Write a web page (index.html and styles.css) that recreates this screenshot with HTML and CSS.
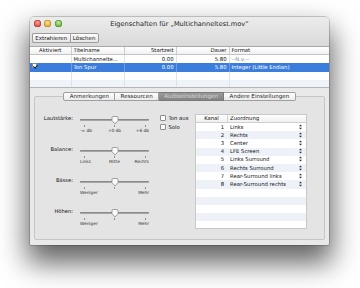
FILE: index.html
```html
<html>
	<head>
		<meta charset="UTF-8">
		<title>Eigenschaften</title>
		<link rel="stylesheet" href="styles.css">
	</head>
	<body>
		<div class="window">
			<div class="top">
				<div class="titlebar">
					<div class="lights">
						<span class="light red"></span>
						<span class="light yellow"></span>
						<span class="light green"></span>
					</div>
					<div class="title">Eigenschaften für „Multichanneltest.mov“</div>
					<div></div>
				</div>
				<div class="toolbar">
					<button class="btn first">Extrahieren</button><button class="btn">Löschen</button>
				</div>
			</div>

			<div class="tracks">
				<div class="trow head">
					<div class="cell center">Aktiviert</div>
					<div class="cell">Titelname</div>
					<div class="cell right">Startzeit</div>
					<div class="cell right">Dauer</div>
					<div class="cell">Format</div>
				</div>
				<div class="trow">
					<div class="cell"></div>
					<div class="cell">Multichannelte...</div>
					<div class="cell right">0.00</div>
					<div class="cell right">5.80</div>
					<div class="cell grey">--N.v.--</div>
				</div>
				<div class="trow selected">
					<div class="cell"><span class="check on"></span></div>
					<div class="cell">Ton Spur</div>
					<div class="cell right">0.00</div>
					<div class="cell right">5.80</div>
					<div class="cell">Integer (Little Endian)</div>
				</div>
				<div class="trow">
					<div class="cell"></div><div class="cell"></div><div class="cell"></div><div class="cell"></div><div class="cell"></div>
				</div>
				<div class="trow">
					<div class="cell"></div><div class="cell"></div><div class="cell"></div><div class="cell"></div><div class="cell"></div>
				</div>
			</div>

			<div class="panel">
				<div class="tabs">
					<span class="tab">Anmerkungen</span>
					<span class="tab">Ressourcen</span>
					<span class="tab active">Audioeinstellungen</span>
					<span class="tab">Andere Einstellungen</span>
				</div>
				<div class="group">
					<div class="sliders">
						<div class="srow">
							<div class="slabel">Lautstärke:</div>
							<div class="slider">
								<div class="track"><svg class="thumb" width="8" height="9" viewBox="0 0 8 9"><path d="M1 1.6 Q1 .5 2.1 .5 H5.9 Q7 .5 7 1.6 V4.6 L4 8 L1 4.6 Z" fill="#fbfbfb" stroke="#8a8a8a" stroke-width=".8"/></svg></div>
								<div class="ticks"><i></i><i></i><i></i></div>
								<div class="scale"><span>-∞ db</span><span>+0 db</span><span>+6 db</span></div>
							</div>
						</div>
						<div class="srow">
							<div class="slabel">Balance:</div>
							<div class="slider">
								<div class="track"><svg class="thumb" width="8" height="9" viewBox="0 0 8 9"><path d="M1 1.6 Q1 .5 2.1 .5 H5.9 Q7 .5 7 1.6 V4.6 L4 8 L1 4.6 Z" fill="#fbfbfb" stroke="#8a8a8a" stroke-width=".8"/></svg></div>
								<div class="ticks"><i></i><i></i><i></i></div>
								<div class="scale"><span>Links</span><span>Mitte</span><span>Rechts</span></div>
							</div>
						</div>
						<div class="srow">
							<div class="slabel">Bässe:</div>
							<div class="slider">
								<div class="track"><svg class="thumb" width="8" height="9" viewBox="0 0 8 9"><path d="M1 1.6 Q1 .5 2.1 .5 H5.9 Q7 .5 7 1.6 V4.6 L4 8 L1 4.6 Z" fill="#fbfbfb" stroke="#8a8a8a" stroke-width=".8"/></svg></div>
								<div class="ticks"><i></i><i></i><i></i></div>
								<div class="scale"><span>Weniger</span><span></span><span>Mehr</span></div>
							</div>
						</div>
						<div class="srow">
							<div class="slabel">Höhen:</div>
							<div class="slider">
								<div class="track"><svg class="thumb" width="8" height="9" viewBox="0 0 8 9"><path d="M1 1.6 Q1 .5 2.1 .5 H5.9 Q7 .5 7 1.6 V4.6 L4 8 L1 4.6 Z" fill="#fbfbfb" stroke="#8a8a8a" stroke-width=".8"/></svg></div>
								<div class="ticks"><i></i><i></i><i></i></div>
								<div class="scale"><span>Weniger</span><span></span><span>Mehr</span></div>
							</div>
						</div>
					</div>

					<div class="checks">
						<label class="opt"><span class="check"></span>Ton aus</label>
						<label class="opt"><span class="check"></span>Solo</label>
					</div>

					<div class="channels">
						<div class="crow chead">
							<div class="kanal">Kanal</div>
							<div class="zuord">Zuordnung</div>
						</div>
						<div class="cbody">
							<div class="crow"><div class="kanal num">1</div><div class="zuord">Links</div><svg class="step" width="3" height="6" viewBox="0 0 3 6"><path d="M0 2.3 L1.5 .4 L3 2.3 Z M0 3.7 L1.5 5.6 L3 3.7 Z" fill="#333"/></svg></div>
							<div class="crow"><div class="kanal num">2</div><div class="zuord">Rechts</div><svg class="step" width="3" height="6" viewBox="0 0 3 6"><path d="M0 2.3 L1.5 .4 L3 2.3 Z M0 3.7 L1.5 5.6 L3 3.7 Z" fill="#333"/></svg></div>
							<div class="crow"><div class="kanal num">3</div><div class="zuord">Center</div><svg class="step" width="3" height="6" viewBox="0 0 3 6"><path d="M0 2.3 L1.5 .4 L3 2.3 Z M0 3.7 L1.5 5.6 L3 3.7 Z" fill="#333"/></svg></div>
							<div class="crow"><div class="kanal num">4</div><div class="zuord">LFE Screen</div><svg class="step" width="3" height="6" viewBox="0 0 3 6"><path d="M0 2.3 L1.5 .4 L3 2.3 Z M0 3.7 L1.5 5.6 L3 3.7 Z" fill="#333"/></svg></div>
							<div class="crow"><div class="kanal num">5</div><div class="zuord">Links Surround</div><svg class="step" width="3" height="6" viewBox="0 0 3 6"><path d="M0 2.3 L1.5 .4 L3 2.3 Z M0 3.7 L1.5 5.6 L3 3.7 Z" fill="#333"/></svg></div>
							<div class="crow"><div class="kanal num">6</div><div class="zuord">Rechts Surround</div><svg class="step" width="3" height="6" viewBox="0 0 3 6"><path d="M0 2.3 L1.5 .4 L3 2.3 Z M0 3.7 L1.5 5.6 L3 3.7 Z" fill="#333"/></svg></div>
							<div class="crow"><div class="kanal num">7</div><div class="zuord">Rear-Surround links</div><svg class="step" width="3" height="6" viewBox="0 0 3 6"><path d="M0 2.3 L1.5 .4 L3 2.3 Z M0 3.7 L1.5 5.6 L3 3.7 Z" fill="#333"/></svg></div>
							<div class="crow"><div class="kanal num">8</div><div class="zuord">Rear-Surround rechts</div><svg class="step" width="3" height="6" viewBox="0 0 3 6"><path d="M0 2.3 L1.5 .4 L3 2.3 Z M0 3.7 L1.5 5.6 L3 3.7 Z" fill="#333"/></svg></div>
						</div>
					</div>
				</div>
			</div>
		</div>
	</body>
</html>
```

FILE: styles.css
```css
*{
	margin: 0;
	padding: 0;
	box-sizing: border-box;
}
body{
	background: #fff;
	padding: 17px 0 0 30px;
	font-family: "DejaVu Sans", "Liberation Sans", sans-serif;
	font-size: 5.3px;
	color: #111;
}
.window{
	width: 299px;
	height: 228px;
	display: flex;
	flex-direction: column;
	background: #e9e9e9;
	border-radius: 4px 4px 1px 1px;
	box-shadow: 0 15px 28px 3px rgba(0,0,0,0.62), 0 0 0 0.5px rgba(0,0,0,0.35);
	overflow: hidden;
}
.top{
	background: linear-gradient(#ececec, #d9d9d9);
	border-bottom: 1px solid #a9a9a9;
}
.titlebar{
	height: 13px;
	display: grid;
	grid-template-columns: 1fr auto 1fr;
	align-items: center;
}
.lights{
	display: flex;
	gap: 3.3px;
	padding-left: 4.2px;
}
.light{
	width: 7px;
	height: 7px;
	border-radius: 50%;
}
.red{
	background: radial-gradient(circle at 50% 35%, #f8a39b, #de4a41 70%);
	box-shadow: inset 0 0 0 0.5px #a8332c;
}
.yellow{
	background: radial-gradient(circle at 50% 35%, #fbe29a, #e0a928 70%);
	box-shadow: inset 0 0 0 0.5px #b07d1a;
}
.green{
	background: radial-gradient(circle at 50% 35%, #c4e9a0, #66b341 70%);
	box-shadow: inset 0 0 0 0.5px #3f8a26;
}
.title{
	font-size: 6.6px;
	color: #222;
}
.toolbar{
	height: 16px;
	padding: 2.5px 0 0 2px;
	display: flex;
	align-items: flex-start;
}
.btn{
	height: 10.5px;
	font-family: "DejaVu Sans", sans-serif;
	font-size: 5.5px;
	color: #111;
	padding: 0 2.3px;
	background: linear-gradient(#fdfdfd, #e6e6e6);
	border: 1px solid #9c9c9c;
}
.btn.first{
	border-right: none;
	border-radius: 2px 0 0 2px;
}
.btn + .btn{
	border-radius: 0 2px 2px 0;
}

/* track table */
.tracks{
	height: 43px;
	overflow: hidden;
	background: #fff;
	border-bottom: 1px solid #b5b5b5;
}
.trow{
	display: grid;
	grid-template-columns: 42px 53px 52px 53px 1fr;
	height: 8.4px;
	line-height: 8.4px;
}
.trow:nth-child(odd){
	background: #eef2f9;
}
.trow.head{
	height: 8px;
	line-height: 7px;
	background: linear-gradient(#fff, #f1f1f1);
	border-bottom: 1px solid #c4c4c4;
}
.cell{
	padding: 0 2px 0 1.5px;
	border-right: 1px solid #e2e2e2;
	white-space: nowrap;
	overflow: hidden;
}
.head .cell{
	border-right-color: #cdcdcd;
}
.cell:last-child{
	border-right: none;
}
.center{
	text-align: center;
}
.right{
	text-align: right;
	padding-right: 2.5px;
}
.grey{
	color: #888;
}
.trow.selected{
	background: #3a7ddc;
	color: #fff;
}
.selected .cell{
	border-right-color: #6a9de6;
}
.check{
	display: inline-block;
	width: 5px;
	height: 5px;
	background: #fff;
	border: 0.6px solid #8d8d8d;
	border-radius: 1px;
	vertical-align: middle;
	position: relative;
}
.check.on::after{
	content: "";
	position: absolute;
	left: 1.1px;
	top: -0.3px;
	width: 1.5px;
	height: 3px;
	border: solid #222;
	border-width: 0 1px 1px 0;
	transform: rotate(40deg);
}

/* lower panel */
.panel{
	flex: 1;
	display: flex;
	flex-direction: column;
	padding: 4px 4px 5px 4px;
}
.tabs{
	display: flex;
	justify-content: center;
	height: 8.5px;
	margin-bottom: -4.5px;
	position: relative;
	z-index: 1;
}
.tab{
	font-size: 5.6px;
	line-height: 7px;
	padding: 0 5.3px;
	background: linear-gradient(#fefefe, #ebebeb);
	border: 0.7px solid #9f9f9f;
	border-left: none;
	color: #1a1a1a;
}
.tab:first-child{
	border-left: 0.7px solid #9f9f9f;
	border-radius: 2px 0 0 2px;
}
.tab:last-child{
	border-radius: 0 2px 2px 0;
}
.tab.active{
	background: linear-gradient(#9a9a9a, #848484);
	color: #d6d6d6;
	border-color: #7a7a7a;
}
.group{
	flex: 1;
	display: flex;
	align-items: flex-start;
	background: #e4e4e4;
	border: 1px solid #c6c6c6;
	border-radius: 2px;
	padding-top: 18px;
}

/* sliders */
.sliders{
	width: 114px;
}
.srow{
	display: grid;
	grid-template-columns: 38px 69px;
	column-gap: 7px;
	height: 31px;
}
.slabel{
	text-align: right;
	font-size: 5.2px;
	line-height: 6px;
}
.track{
	height: 10px;
	position: relative;
}
.track::before{
	content: "";
	position: absolute;
	left: 0;
	right: 0;
	top: 4px;
	height: 2px;
	border-radius: 1px;
	background: #a6a6a6;
	box-shadow: inset 0 0.5px 0 #6f6f6f;
}
.thumb{
	position: absolute;
	left: 31px;
	top: 1px;
}
.ticks{
	display: flex;
	justify-content: space-between;
	height: 2px;
	margin: 0 3.5px;
}
.ticks i{
	width: 0.7px;
	height: 1.6px;
	background: #8f8f8f;
}
.scale{
	display: grid;
	grid-template-columns: 1fr auto 1fr;
	margin-top: 1px;
	font-size: 4.3px;
	line-height: 5px;
	color: #333;
}
.scale span:last-child{
	text-align: right;
}

/* checkboxes */
.checks{
	width: 35px;
	margin-left: 11px;
	display: flex;
	flex-direction: column;
	gap: 3px;
}
.opt{
	display: flex;
	align-items: center;
	gap: 3px;
	height: 6px;
	font-size: 5.3px;
}
.opt .check{
	width: 5.5px;
	height: 5.5px;
}

/* channel table */
.channels{
	width: 112px;
	height: 115px;
	margin-top: -1.5px;
	border: 1px solid #c8c8c8;
	background: #fff;
	overflow: hidden;
}
.crow{
	display: flex;
	align-items: center;
	height: 8.2px;
}
.chead{
	height: 8px;
	background: linear-gradient(#fff, #f0f0f0);
	border-bottom: 1px solid #cfcfcf;
}
.cbody{
	height: 106px;
	background: repeating-linear-gradient(#fff 0, #fff 8.2px, #eef1f8 8.2px, #eef1f8 16.4px);
}
.kanal{
	width: 32px;
	text-align: center;
}
.chead .kanal{
	border-right: 1px solid #d2d2d2;
	height: 100%;
	line-height: 7px;
}
.kanal.num{
	text-align: right;
	padding-right: 4px;
}
.zuord{
	flex: 1;
	padding-left: 2px;
}
.step{
	margin-right: 4px;
}
```
